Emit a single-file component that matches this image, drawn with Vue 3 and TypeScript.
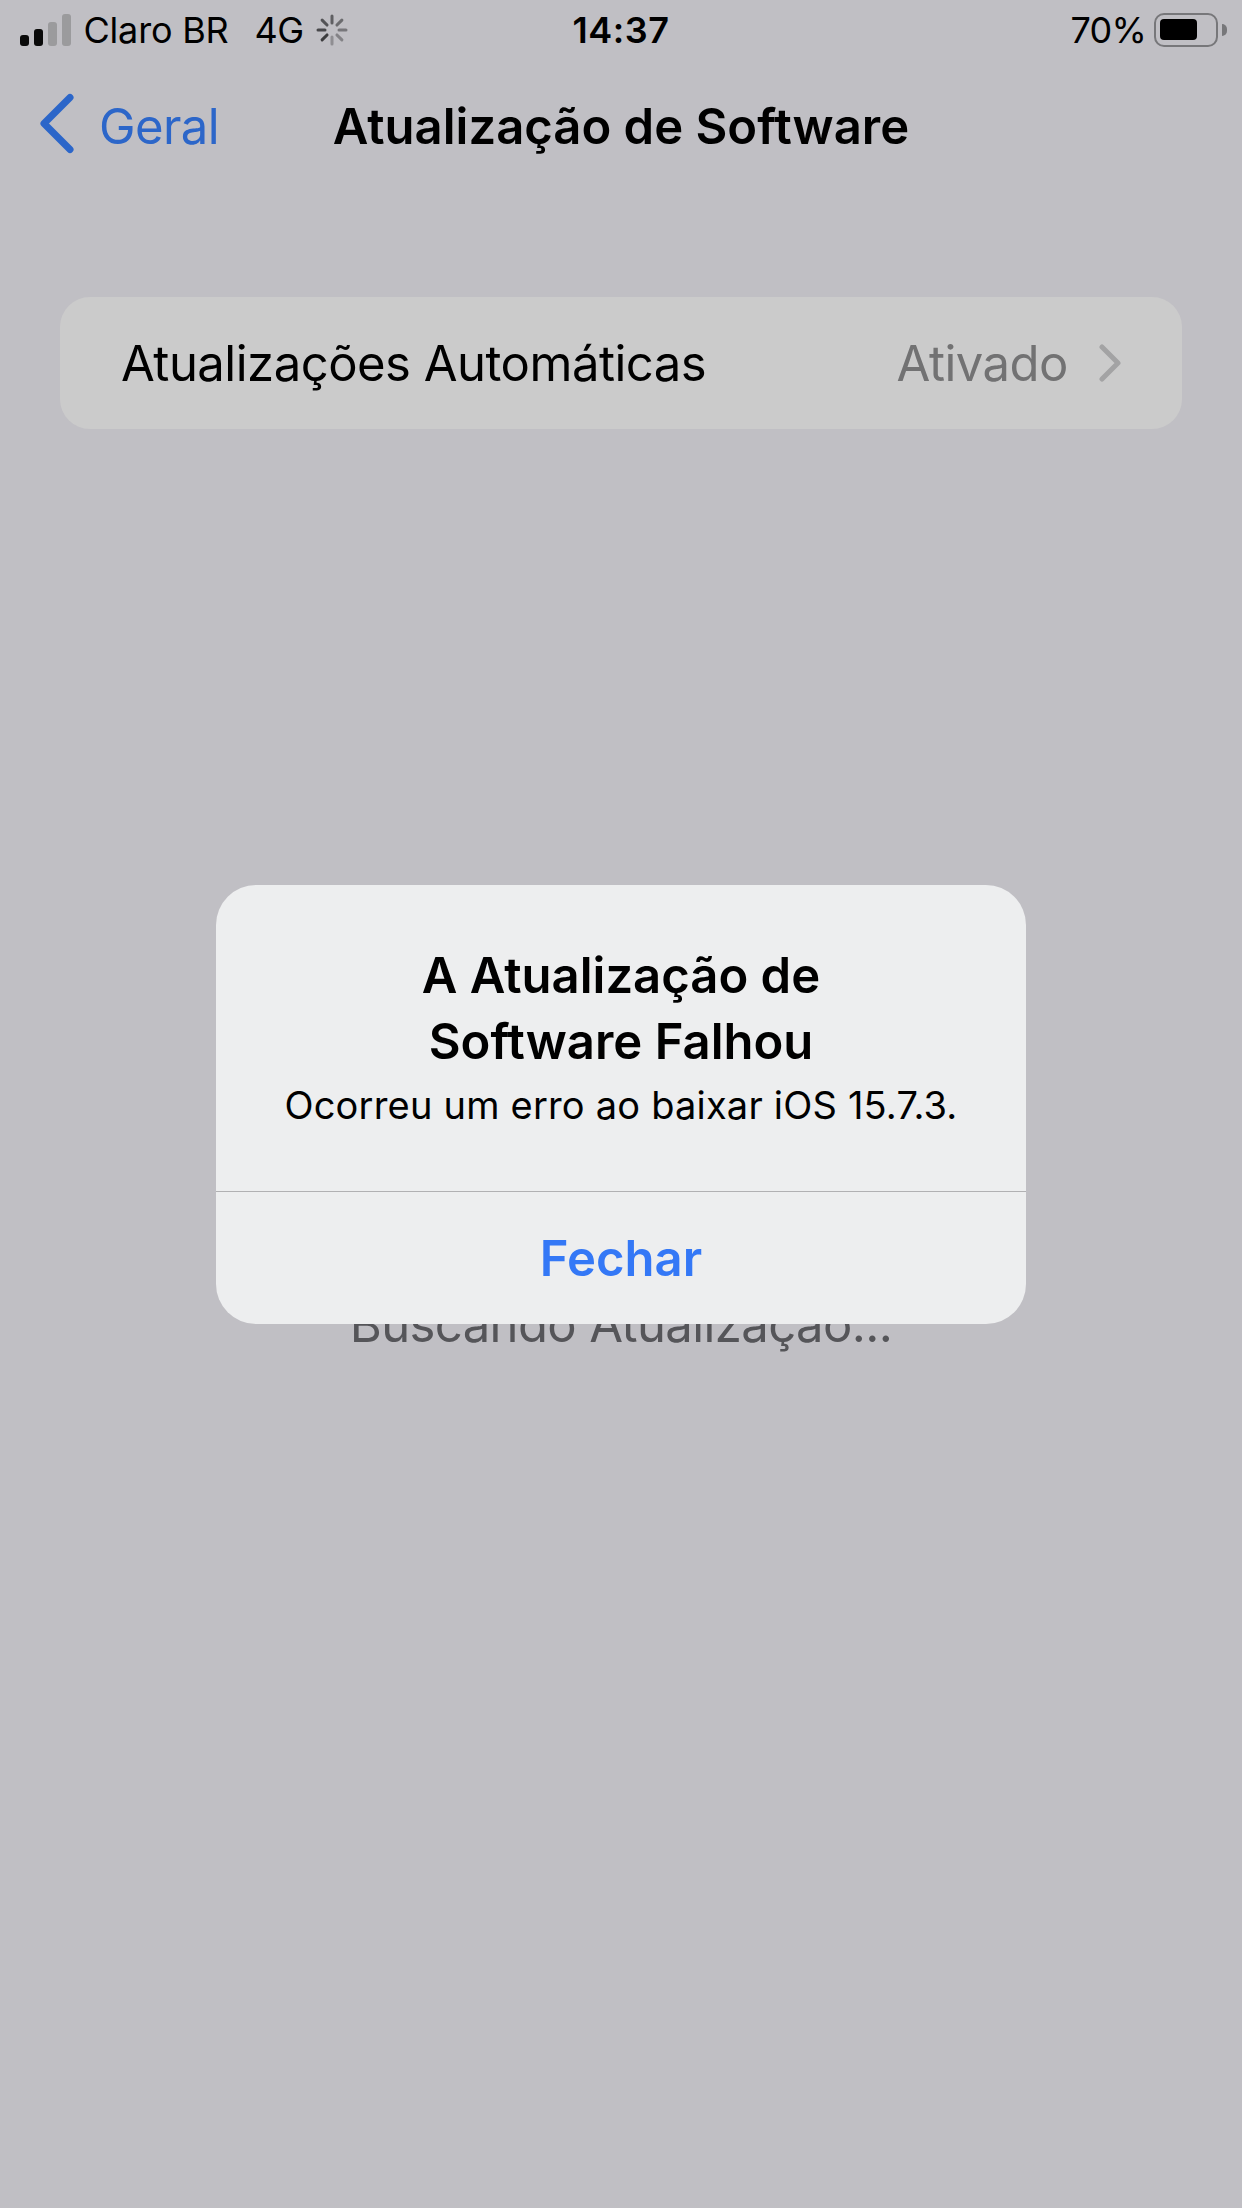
<script setup lang="ts">
const spinnerSpokes = [0, 45, 90, 135, 180, 225, 270, 315]
const spokeOpacity = (i: number) => 1 - ((i + 3) % 8) * 0.09
</script>

<template>
  <div class="screen">
    <div class="status-bar">
      <div class="status-left">
        <div class="signal">
          <span class="bar bar-1 on"></span>
          <span class="bar bar-2 on"></span>
          <span class="bar bar-3"></span>
          <span class="bar bar-4"></span>
        </div>
        <span class="carrier">Claro BR</span>
        <span class="network">4G</span>
        <svg class="spinner" width="32" height="32" viewBox="0 0 32 32">
          <line
            v-for="(deg, i) in spinnerSpokes"
            :key="deg"
            x1="16"
            y1="2"
            x2="16"
            y2="9"
            stroke="#3c3c3e"
            stroke-width="3"
            stroke-linecap="round"
            :opacity="spokeOpacity(i)"
            :transform="`rotate(${deg} 16 16)`"
          />
        </svg>
      </div>
      <span class="clock">14:37</span>
      <div class="status-right">
        <span class="percent">70%</span>
        <div class="battery"><span class="battery-fill"></span></div>
        <span class="battery-tip"></span>
      </div>
    </div>

    <div class="nav-bar">
      <div class="back">
        <svg class="back-icon" width="37" height="61" viewBox="0 0 37 61">
          <path d="M32 4.5 6 30.5l26 26" fill="none" stroke="#2c66c9" stroke-width="7" stroke-linecap="round" stroke-linejoin="round" />
        </svg>
        <span class="back-label">Geral</span>
      </div>
      <h1 class="nav-title">Atualização de Software</h1>
    </div>

    <div class="settings-row">
      <span class="row-label">Atualizações Automáticas</span>
      <div class="row-value">
        <span>Ativado</span>
        <svg width="24" height="38" viewBox="0 0 24 38">
          <path d="M4 3 20 19 4 35" fill="none" stroke="#a3a3a4" stroke-width="5" stroke-linecap="round" stroke-linejoin="round" />
        </svg>
      </div>
    </div>

    <p class="searching">Buscando Atualização...</p>

    <div class="dialog-layer">
      <div class="dialog">
        <div class="dialog-body">
          <h2 class="dialog-title">A Atualização de<br />Software Falhou</h2>
          <p class="dialog-text">Ocorreu um erro ao baixar iOS 15.7.3.</p>
        </div>
        <button class="dialog-btn">Fechar</button>
      </div>
    </div>
  </div>
</template>

<style scoped>
.screen {
  position: relative;
  width: 1242px;
  height: 2208px;
  overflow: hidden;
  background: #c0bfc4;
  color: #000;
  font-family: Inter, "Liberation Sans", sans-serif;
}

.status-bar {
  height: 60px;
  padding: 0 15px 0 20px;
  display: grid;
  grid-template-columns: 1fr auto 1fr;
  align-items: center;
  font-size: 36px;
}

.status-left {
  display: flex;
  align-items: center;
}

.signal {
  display: flex;
  align-items: flex-end;
  gap: 5.5px;
  height: 32px;
  margin-right: 13px;
}

.bar {
  width: 8.5px;
  border-radius: 3px;
  background: #9b9b9d;
}

.bar.on {
  background: #0a0a0a;
}

.bar-1 { height: 11px; }
.bar-2 { height: 17px; }
.bar-3 { height: 24px; }
.bar-4 { height: 32px; }

.carrier {
  letter-spacing: -0.2px;
}

.network {
  margin-left: 26px;
  letter-spacing: -0.6px;
}

.spinner {
  margin-left: 13px;
}

.clock {
  font-weight: 600;
  letter-spacing: 0.5px;
  margin-left: -5px;
}

.status-right {
  display: flex;
  align-items: center;
  justify-content: flex-end;
}

.percent {
  letter-spacing: -0.8px;
  margin-right: 8px;
}

.battery {
  width: 64px;
  height: 34px;
  box-sizing: border-box;
  padding: 4px;
  border: 2.5px solid #77777a;
  border-radius: 10px;
  margin-right: 4px;
}

.battery-fill {
  display: block;
  width: 37px;
  height: 21px;
  background: #000;
  border-radius: 4px;
}

.battery-tip {
  width: 5px;
  height: 12px;
  background: #77777a;
  border-radius: 0 6px 6px 0;
}

.nav-bar {
  position: relative;
  height: 132px;
  display: flex;
  align-items: center;
  justify-content: center;
}

.back {
  position: absolute;
  left: 38px;
  top: 37px;
  display: flex;
  align-items: center;
  gap: 24px;
  font-size: 49px;
  letter-spacing: -0.6px;
  color: #2c66c9;
}

.back-icon {
  flex: none;
  margin-top: -6px;
}

.nav-title {
  margin: 0;
  font-size: 49px;
  font-weight: 600;
  letter-spacing: 0;
}

.settings-row {
  margin: 105px 60px 0;
  height: 132px;
  padding: 0 60px 0 61px;
  display: flex;
  align-items: center;
  justify-content: space-between;
  background: #cbcbcb;
  border-radius: 30px;
  font-size: 49px;
  letter-spacing: -0.5px;
}

.row-value {
  display: flex;
  align-items: center;
  gap: 30px;
  color: #727273;
}

.searching {
  margin: 866px 0 0;
  text-align: center;
  font-size: 49px;
  letter-spacing: -0.6px;
  color: #555559;
}

.dialog-layer {
  position: absolute;
  inset: 0;
  display: flex;
  justify-content: center;
  padding-top: 885px;
  box-sizing: border-box;
}

.dialog {
  width: 810px;
  height: 439px;
  display: flex;
  flex-direction: column;
  background: #edeeef;
  border-radius: 40px;
}

.dialog-body {
  height: 307px;
  box-sizing: border-box;
  padding-top: 58px;
  border-bottom: 1px solid #b1b1b3;
  text-align: center;
}

.dialog-title {
  margin: 0;
  font-size: 49px;
  line-height: 66px;
  font-weight: 600;
  letter-spacing: 0;
}

.dialog-text {
  margin: 7px 0 0;
  font-size: 38px;
  letter-spacing: 0.2px;
}

.dialog-btn {
  flex: 1;
  border: none;
  background: transparent;
  padding: 0;
  font-family: inherit;
  font-size: 49px;
  font-weight: 600;
  letter-spacing: 0;
  color: #3478f6;
}
</style>
